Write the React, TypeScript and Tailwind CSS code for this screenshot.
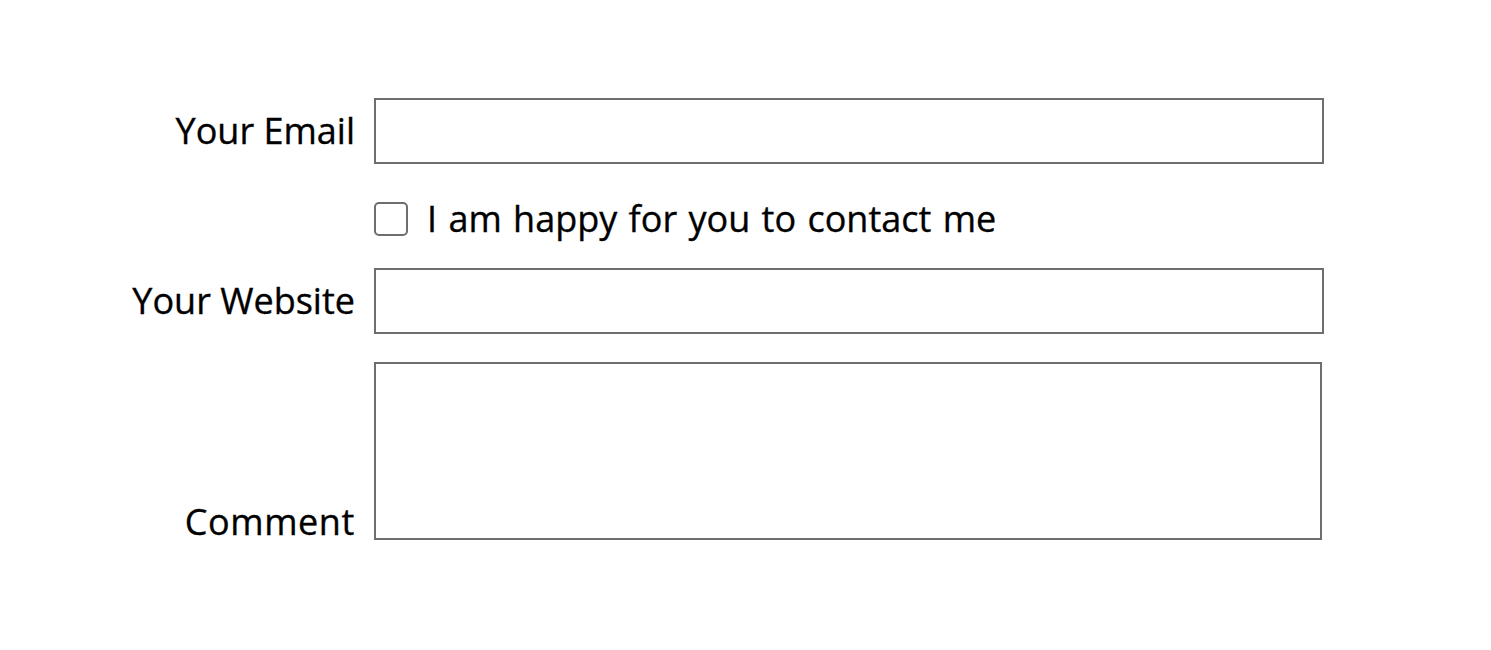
import React from "react";

export default function App() {
  return (
    <div className="min-h-[650px] w-full bg-white font-['Open_Sans',sans-serif] text-[36px] leading-[1.3] text-black [-webkit-text-stroke:0.35px_black]">
      <form className="grid grid-cols-[355px_950px] gap-x-[19px] pt-[98px]">
        {/* Email */}
        <label htmlFor="email" className="flex h-[66px] items-center justify-end">
          Your Email
        </label>
        <input
          id="email"
          type="email"
          className="h-[66px] w-[950px] border-2 border-[#6e6e6e] bg-white outline-none"
        />

        {/* Contact checkbox */}
        <div />
        <label className="mt-[38px] flex h-[34px] items-center gap-[19px]">
          <span className="h-[34px] w-[34px] shrink-0 rounded-[5px] border-2 border-[#6e6e6e] bg-white" />
          <span className="[word-spacing:2px]">I am happy for you to contact me</span>
        </label>

        {/* Website */}
        <label htmlFor="website" className="mt-[32px] flex h-[66px] items-center justify-end">
          Your Website
        </label>
        <input
          id="website"
          type="url"
          className="mt-[32px] h-[66px] w-[950px] border-2 border-[#6e6e6e] bg-white outline-none"
        />

        {/* Comment */}
        <label htmlFor="comment" className="mt-[28px] flex h-[178px] items-end justify-end leading-[1] tracking-[0.6px]">
          Comment
        </label>
        <textarea
          id="comment"
          className="mt-[28px] h-[178px] w-[948px] resize-none border-2 border-[#6e6e6e] bg-white outline-none"
        />
      </form>
    </div>
  );
}
